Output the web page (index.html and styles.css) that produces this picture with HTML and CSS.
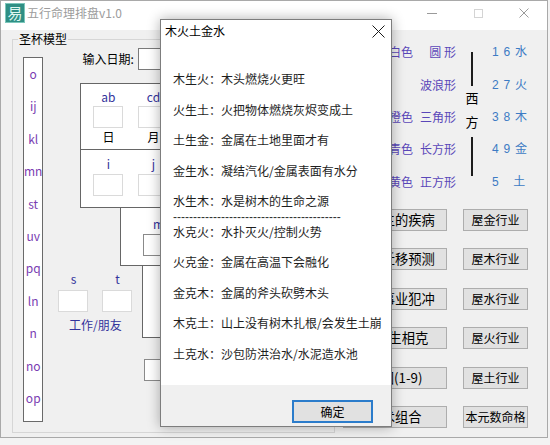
FILE: index.html
```html
<!DOCTYPE html>
<html lang="zh-CN">
<head>
<meta charset="utf-8">
<title>五行命理排盘v1.0</title>
<link rel="stylesheet" href="styles.css">
</head>
<body>
<div class="main">
  <div class="titlebar">
    <span class="appicon">易</span>
    <span class="wtitle">五行命理排盘v1.0</span>
    <div class="ctrls">
      <span class="cb"><span class="min"></span></span>
      <span class="cb"><span class="max"></span></span>
      <span class="cb"><svg class="xicon" width="10" height="10" viewBox="0 0 10 10"><path d="M0.5 0.5L9.5 9.5M9.5 0.5L0.5 9.5" stroke="#9a9a9a" stroke-width="1" fill="none"/></svg></span>
    </div>
  </div>
  <div class="client">
    <div class="group">
      <div class="legend">圣杯模型</div>
      <div class="letters">
        <span>o</span><span>ij</span><span>kl</span><span>mn</span><span>st</span><span>uv</span><span>pq</span><span>ln</span><span>n</span><span>no</span><span>op</span>
      </div>
      <div class="work">
        <div class="daterow"><span class="lbl">输入日期:</span><span class="input date"></span></div>
        <div class="panel">
          <div class="sec sec-top">
            <div class="col"><span class="k">ab</span><span class="box"></span><span class="d">日</span></div>
            <div class="col"><span class="k">cd</span><span class="box"></span><span class="d">月</span></div>
          </div>
          <div class="sec sec-bot">
            <div class="col"><span class="k">i</span><span class="box"></span></div>
            <div class="col"><span class="k">j</span><span class="box"></span></div>
          </div>
        </div>
        <div class="tier2">
          <div class="col"><span class="k">m</span><span class="box"></span></div>
        </div>
        <div class="row3">
          <div class="st">
            <div class="stcols">
              <div class="col"><span class="k">s</span><span class="box"></span></div>
              <div class="col"><span class="k">t</span><span class="box"></span></div>
            </div>
            <div class="cap">工作/朋友</div>
          </div>
          <div class="tier3"></div>
        </div>
        <div class="input lone"></div>
      </div>
    </div>
    <div class="right">
      <div class="info">
        <span class="c1">白色</span><span class="c2">圆 形</span>
        <div class="divider"><span class="vline l1"></span><span class="dir">西</span><span class="dir">方</span><span class="vline l2"></span></div>
        <span class="c4">1 6 水</span>
        <span class="c1"></span><span class="c2">波浪形</span><span class="c4">2 7 火</span>
        <span class="c1">橙色</span><span class="c2">三角形</span><span class="c4">3 8 木</span>
        <span class="c1">青色</span><span class="c2">长方形</span><span class="c4">4 9 金</span>
        <span class="c1">黄色</span><span class="c2">正方形</span><span class="c4">5   土</span>
      </div>
      <div class="buttons">
        <span class="btn mid">五行主的疾病</span><span class="btn">屋金行业</span>
        <span class="btn mid">五行迁移预测</span><span class="btn">屋木行业</span>
        <span class="btn mid">五行事业犯冲</span><span class="btn">屋水行业</span>
        <span class="btn mid">五行生相克</span><span class="btn">屋火行业</span>
        <span class="btn mid">原因(1-9)</span><span class="btn">屋土行业</span>
        <span class="btn mid">数术组合</span><span class="btn">本元数命格</span>
      </div>
    </div>
  </div>
</div>

<div class="dialog">
  <div class="dtitle">
    <span>木火土金水</span>
    <svg class="dclose" width="13" height="13" viewBox="0 0 13 13"><path d="M0.5 0.5L12.5 12.5M12.5 0.5L0.5 12.5" stroke="#1a1a1a" stroke-width="1" fill="none"/></svg>
  </div>
  <div class="dbody">
    <div class="ln">木生火：木头燃烧火更旺</div>
    <div class="ln">火生土：火把物体燃烧灰烬变成土</div>
    <div class="ln">土生金：金属在土地里面才有</div>
    <div class="ln">金生水：凝结汽化/金属表面有水分</div>
    <div class="ln">水生木：水是树木的生命之源</div>
    <div class="sep">------------------------------------------</div>
    <div class="ln">水克火：水扑灭火/控制火势</div>
    <div class="ln">火克金：金属在高温下会融化</div>
    <div class="ln">金克木：金属的斧头砍劈木头</div>
    <div class="ln">木克土：山上没有树木扎根/会发生土崩</div>
    <div class="ln">土克水：沙包防洪治水/水泥造水池</div>
  </div>
  <div class="dfoot"><span class="ok">确定</span></div>
</div>
</body>
</html>
```
FILE: styles.css
```css
* { box-sizing: border-box; }
html, body { margin: 0; padding: 0; }
body {
  width: 550px;
  height: 445px;
  overflow: hidden;
  position: relative;
  background: #f3f3f3;
  font-family: "Noto Sans CJK SC", "Noto Sans", sans-serif;
  font-size: 12px;
  color: #000;
}

/* main window */
.main {
  width: 548px;
  height: 438px;
  border: 1px solid #a9a9a9;
  background: #f0f0f0;
  display: flex;
  flex-direction: column;
}
.titlebar {
  height: 29px;
  flex-shrink: 0;
  background: #fff;
  display: flex;
  align-items: flex-start;
}
.appicon {
  width: 20px;
  height: 20px;
  margin: 2px 0 0 4px;
  background: #2f8f84;
  border: 1px solid #7cc7bb;
  color: #dff7f1;
  font-size: 15px;
  line-height: 18px;
  text-align: center;
}
.wtitle {
  margin: 2px 0 0 2px;
  line-height: 20px;
  color: #9c9c9c;
}
.ctrls { margin-left: auto; display: flex; }
.cb {
  width: 46px;
  height: 24px;
  display: flex;
  align-items: center;
  justify-content: center;
}
.min { width: 10px; height: 1px; background: #9a9a9a; }
.max { width: 9px; height: 9px; border: 1px solid #d4d4d4; }

.client { flex: 1; display: flex; align-items: flex-start; }

/* group box */
.group {
  position: relative;
  margin: 9px 0 0 11px;
  width: 323px;
  height: 394px;
  border: 1px solid #d6d6d6;
  display: flex;
  align-items: flex-start;
}
.legend {
  position: absolute;
  top: -9px;
  left: 5px;
  padding: 0 1px;
  background: #f0f0f0;
  line-height: 16px;
}
.letters {
  margin: 17px 0 0 10px;
  width: 22px;
  height: 365px;
  background: #fff;
  border: 1px solid #6a6a6a;
  display: flex;
  flex-direction: column;
}
.letters span {
  height: 32.4px;
  line-height: 32.4px;
  text-align: center;
  color: #7a3db2;
}
.work {
  margin: 8px 0 0 15px;
  display: flex;
  flex-direction: column;
  align-items: flex-start;
}
.daterow { margin-left: 24px; height: 22px; display: flex; align-items: center; }
.lbl { width: 56px; line-height: 16px; }
.input { background: #fff; border: 1px solid #7a7a7a; height: 22px; }
.date { width: 120px; }

.panel {
  margin: 13px 0 0 22px;
  width: 230px;
  height: 125px;
  background: #fff;
  border: 1px solid #666;
  display: flex;
  flex-direction: column;
}
.sec { display: flex; gap: 15px; padding-left: 12px; }
.sec-top { height: 66px; border-bottom: 1px solid #666; padding-top: 5px; }
.sec-bot { flex: 1; padding-top: 6px; }
.col { width: 30px; display: flex; flex-direction: column; align-items: center; }
.k { line-height: 16px; color: #33339c; }
.d { line-height: 16px; margin-top: 1px; }
.box {
  width: 30px;
  height: 22px;
  background: #fff;
  border: 1px solid #dadada;
  margin-top: 1px;
}
.sec-bot .box { margin-top: 2px; }

.tier2 {
  margin-left: 62px;
  width: 200px;
  height: 58px;
  background: #fff;
  border: 1px solid #666;
  border-top: none;
  padding: 8px 0 0 22px;
}
.tier2 .box { margin-top: 2px; border-color: #8a8a8a; }
.row3 { display: flex; align-items: flex-start; }
.st { width: 84px; padding-top: 5px; }
.stcols { display: flex; gap: 14px; }
.stcols .box { margin-top: 3px; }
.cap { width: 74px; margin-top: 5px; line-height: 16px; text-align: center; color: #33339c; }
.tier3 {
  width: 200px;
  height: 72px;
  background: #fff;
  border: 1px solid #666;
  border-top: none;
}
.lone { margin: 21px 0 0 86px; width: 60px; border-color: #8a8a8a; }

/* right side */
.right { margin: 6px 0 0 8px; width: 185px; display: flex; flex-direction: column; }
.info {
  margin-left: 46px;
  display: grid;
  grid-template-columns: 24px 43px 32px auto;
  grid-auto-rows: 32.4px;
  align-items: center;
  color: #5a47b9;
}
.info span { line-height: 16px; white-space: pre; }
.c2 { text-align: right; }
.c4 {
  padding-left: 4px;
  color: #3d7bc4;
  font-family: "Liberation Sans", "Noto Sans CJK SC", sans-serif;
  word-spacing: 1.5px;
}
.divider {
  grid-column: 3;
  grid-row: 1 / span 5;
  align-self: start;
  display: flex;
  flex-direction: column;
  align-items: center;
  color: #000;
}
.vline { width: 2px; background: #1c1c1c; }
.l1 { margin-top: 16px; height: 34px; }
.info .dir { line-height: 24px; font-size: 13px; }
.divider .dir:first-of-type { margin-top: 6px; }
.l2 { margin-top: 3px; height: 39px; }

.buttons {
  margin-top: 11px;
  display: grid;
  grid-template-columns: 104px 65px;
  grid-auto-rows: 22px;
  column-gap: 16px;
  row-gap: 17.5px;
}
.btn {
  background: #e1e1e1;
  border: 1px solid #adadad;
  display: flex;
  align-items: center;
  justify-content: center;
  white-space: nowrap;
  line-height: 16px;
}
.btn.mid { font-size: 13.3px; }

/* dialog window */
.dialog {
  position: absolute;
  left: 160px;
  top: 19px;
  width: 232px;
  height: 408px;
  background: #fff;
  border: 1px solid #7d7d7d;
  box-shadow: 0 0 12px rgba(0, 0, 0, 0.32);
  display: flex;
  flex-direction: column;
}
.dtitle {
  height: 22px;
  flex-shrink: 0;
  display: flex;
  align-items: center;
  justify-content: space-between;
  padding-left: 4px;
  line-height: 16px;
}
.dclose { margin-right: 6px; }
.dbody { flex: 1; padding: 22px 0 0 12px; color: #1e1e1e; }
.ln { line-height: 30.5px; white-space: nowrap; }
.sep {
  height: 0;
  line-height: 0;
  font-family: "Liberation Sans", sans-serif;
  font-size: 12px;
  white-space: nowrap;
  color: #333;
}
.dfoot {
  height: 41px;
  flex-shrink: 0;
  background: #f0f0f0;
  display: flex;
  justify-content: flex-end;
  align-items: flex-start;
  padding: 15px 18px 0 0;
}
.ok {
  width: 81px;
  height: 23px;
  background: #e1e1e1;
  border: 2px solid #2b7ccb;
  display: flex;
  align-items: center;
  justify-content: center;
  line-height: 16px;
}
```
